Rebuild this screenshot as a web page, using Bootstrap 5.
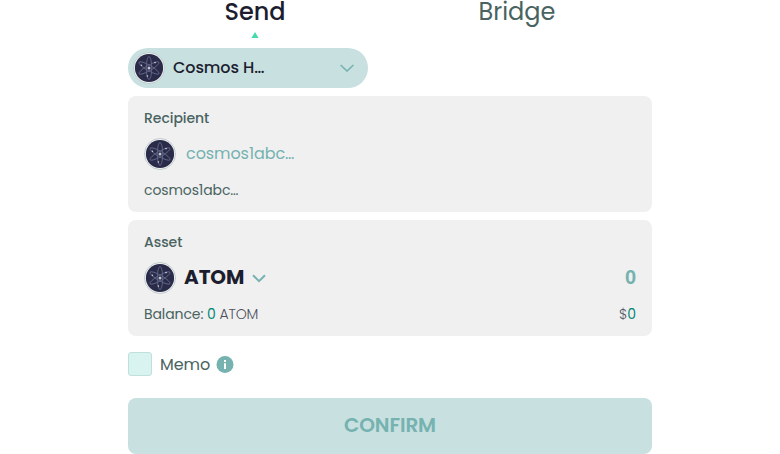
<!DOCTYPE html>
<html lang="en">
<head>
<meta charset="utf-8">
<meta name="viewport" content="width=device-width, initial-scale=1">
<title>Send</title>
<link href="https://cdn.jsdelivr.net/npm/bootstrap@5.3.0/dist/css/bootstrap.min.css" rel="stylesheet">
<style>
body{font-family:Poppins,Inter,sans-serif;color:#486360;background:#fff;height:454px;overflow:hidden}
.send-form{width:524px}
.mode-tabs{height:48px;margin-left:-4px;margin-right:4px;font-size:24px;line-height:24px}
.mode-tabs .active-tab{color:#1c1e2f;font-weight:500}
.tab-arrow{width:8px;height:6px;margin-top:8px}
.chain-pill{width:240px;height:40px;background:#c8e0e0;color:#1c1e2f;padding:0 14px 0 5px;font-size:16px;font-weight:500}
.chain-name{margin-left:8px;letter-spacing:-.1px}
.token{width:32px;height:32px;flex:none}
.panel{height:116px;background:#f0f0f0;border-radius:8px;padding:11px 16px 0;margin-top:8px}
.panel-label{font-size:14px;line-height:22px;font-weight:500;letter-spacing:-.05px}
.panel-main{height:32px;margin-top:9px}
.panel-foot{font-size:14px;line-height:20px;margin-top:10px;letter-spacing:-.1px}
.teal{color:#75b2b0}
.deep{color:#008675}
.light-text{color:#4d505c;font-weight:300}
.addr{margin-left:10px;letter-spacing:-.08px}
.asset-name{font-size:20px;font-weight:700;color:#1c1e2f;line-height:30px;margin-bottom:2px;letter-spacing:-.1px}
.amount{font-family:"Liberation Sans",Arial,sans-serif;font-size:20px;font-weight:700;line-height:30px;margin-bottom:2px}
.memo-row{height:24px;margin-top:16px;font-size:16px;line-height:25px}
.memo-box{width:24px;height:24px;background:#d9f4f0;border:1px solid #bfe0dc;border-radius:3px}
.memo-text{letter-spacing:-.1px}
.info-icon{margin:4px 0 0 6px}
.btn.confirm{height:56px;margin-top:22px;background:#c8e0e0;color:#75b2b0;border:0;border-radius:8px;font-size:20px;font-weight:600;padding:0 0 2px;letter-spacing:-.1px}
</style>
<script src="https://cdn.jsdelivr.net/npm/bootstrap@5.3.0/dist/js/bootstrap.bundle.min.js"></script>
</head>
<body>
<svg class="d-none" xmlns="http://www.w3.org/2000/svg">
<symbol id="atom" viewBox="0 0 32 32">
<circle cx="16" cy="16" r="15.500" fill="#f4f4f5" stroke="#b4c1c4" stroke-width=".8"/>
<circle cx="16" cy="16" r="14.100" fill="#292b49"/>
<g fill="none" stroke="#696d8d" stroke-width=".8">
<ellipse cx="16" cy="16" rx="2.700" ry="11.500"/>
<ellipse cx="16" cy="16" rx="2.700" ry="11.500" transform="rotate(60 16 16)"/>
<ellipse cx="16" cy="16" rx="2.700" ry="11.500" transform="rotate(120 16 16)"/>
</g>
<circle cx="16" cy="16" r="1.500" fill="#c3c5d2"/>
<circle cx="22" cy="10.600" r=".8" fill="#d5d7e2"/><circle cx="8.400" cy="13.300" r=".8" fill="#d5d7e2"/><circle cx="14.400" cy="24" r=".8" fill="#d5d7e2"/>
</symbol>
</svg>
<main class="send-form mx-auto">
<nav class="mode-tabs d-flex text-center">
<div class="w-50 active-tab d-flex flex-column align-items-center"><span>Send</span><svg class="tab-arrow" viewBox="0 0 8 6"><path d="M4 0l3.600 6H.4z" fill="#45dbae"/></svg></div>
<div class="w-50"><span>Bridge</span></div>
</nav>
<div class="chain-pill rounded-pill d-flex align-items-center">
<svg class="token"><use href="#atom"/></svg>
<span class="chain-name">Cosmos H…</span>
<svg class="ms-auto" width="14" height="8" viewBox="0 0 14 8"><path d="M.6 1L7 7l6.400-6" fill="none" stroke="#75b2b0" stroke-width="1.600"/></svg>
</div>
<section class="panel">
<div class="panel-label">Recipient</div>
<div class="panel-main d-flex align-items-center"><svg class="token"><use href="#atom"/></svg><span class="addr teal">cosmos1abc…</span></div>
<div class="panel-foot">cosmos1abc…</div>
</section>
<section class="panel">
<div class="panel-label">Asset</div>
<div class="panel-main d-flex align-items-center"><svg class="token"><use href="#atom"/></svg><span class="asset-name ms-2">ATOM</span><svg class="ms-2" width="14" height="9" viewBox="0 0 14 9"><path d="M1 1.200L7 7.200l6-6" fill="none" stroke="#75b2b0" stroke-width="2"/></svg><span class="amount teal ms-auto">0</span></div>
<div class="panel-foot d-flex justify-content-between"><span>Balance:<span class="light-text"> <span class="deep fw-normal">0</span> ATOM</span></span><span class="light-text">$<span class="deep fw-normal">0</span></span></div>
</section>
<div class="memo-row d-flex align-items-start"><span class="memo-box"></span><span class="memo-text ms-2">Memo</span>
<svg class="info-icon" width="18" height="18" viewBox="0 0 18 18"><circle cx="9" cy="8.500" r="8.500" fill="#75b2b0"/><path d="M8 4h2v2H8zM8 7.200h2V13H8z" fill="#fff"/></svg></div>
<button class="btn confirm w-100">CONFIRM</button>
</main>
</body>
</html>
